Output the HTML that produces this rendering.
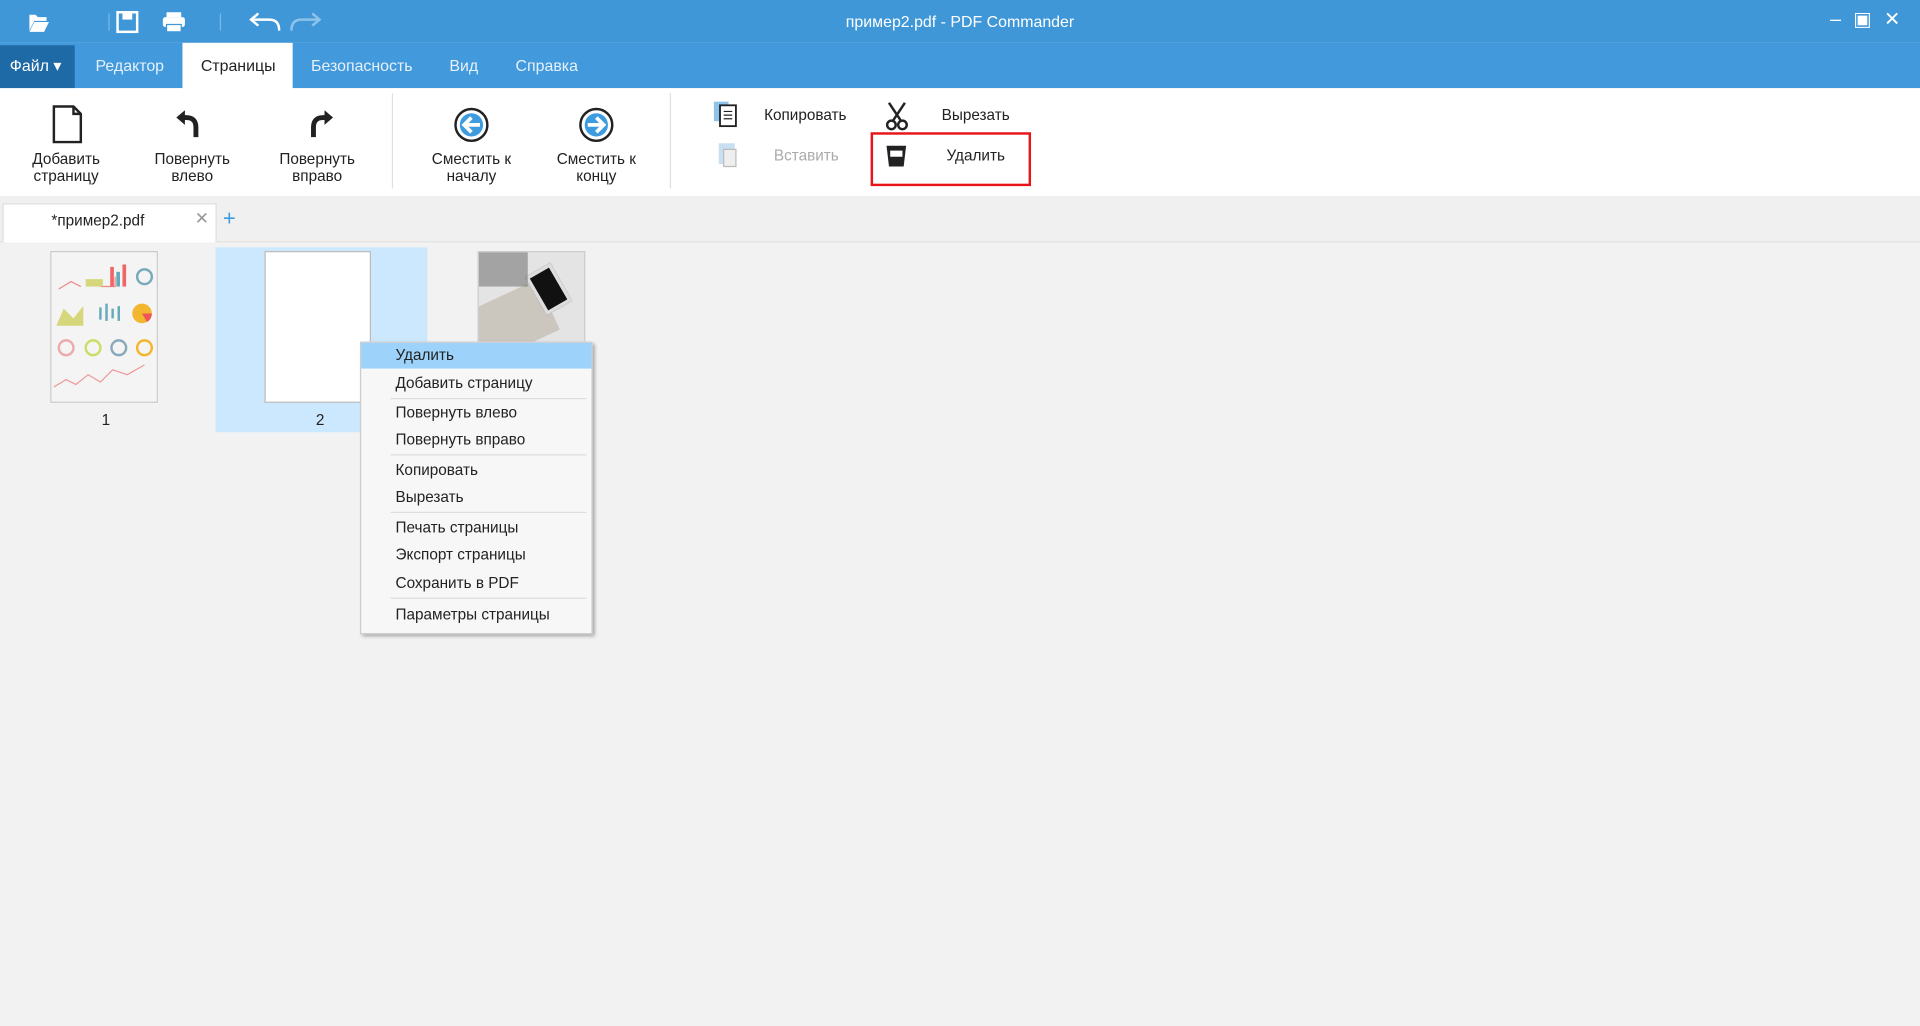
<!DOCTYPE html>
<html><head><meta charset="utf-8"><style>
*{margin:0;padding:0;box-sizing:border-box}
html,body{width:1920px;height:1026px;overflow:hidden;background:#f2f2f2}
#w{position:absolute;left:0;top:0;width:1568px;height:838px;transform:scale(1.22449);transform-origin:0 0;font-family:"Liberation Sans",sans-serif;background:#f2f2f2}
.a{position:absolute}
.title{left:0;top:0;width:1568px;height:35px;background:#3f97d8}
.menu{left:0;top:35px;width:1568px;height:37px;background:#4299db}
.mi{position:absolute;top:35px;height:37px;line-height:37px;font-size:13px;color:#e6f1fb}
.tb{left:0;top:72px;width:1568px;height:88px;background:#fff}
.lbl{position:absolute;font-size:12.5px;color:#222;text-align:center;line-height:14px}
.cm{left:294px;top:279px;width:190px;height:239px;background:#f7f7f7;border:1px solid #ccc;box-shadow:2px 2px 3px rgba(0,0,0,.35)}
.ci{position:absolute;left:28px;font-size:12.5px;color:#222}
.sep{position:absolute;left:24px;right:4px;height:1px;background:#ddd}
</style></head><body><div id="w">
<div class="a title"></div>
<div class="a" style="left:0;top:0;width:1568px;text-align:center;line-height:35px;color:#fff;font-size:13px">пример2.pdf - PDF Commander</div>
<svg class="a" style="left:20px;top:8px" width="250" height="20" viewBox="0 0 250 20">
<path d="M4 4h5l2 2h7v3H8l-4 8z" fill="#fff"/><path d="M8 10h12l-4 8H4z" fill="#fff"/>
<line x1="69" y1="3" x2="69" y2="17" stroke="#7db8e6"/>
<rect x="76" y="2" width="16" height="16" fill="none" stroke="#fff" stroke-width="2"/><rect x="80" y="3" width="8" height="5" fill="#fff"/>
<rect x="113" y="6" width="18" height="8" rx="2" fill="#fff"/><rect x="116" y="2" width="12" height="4" fill="#fff"/><rect x="116" y="12" width="12" height="6" fill="#fff" stroke="#3f97d8"/>
<line x1="160" y1="3" x2="160" y2="17" stroke="#7db8e6"/>
<path d="M186 8h14q8 0 8 9" fill="none" stroke="#fff" stroke-width="2"/><path d="M191 3l-6 5 6 5" fill="none" stroke="#fff" stroke-width="2"/>
<path d="M240 8h-14q-8 0-8 9" fill="none" stroke="#8fc2ea" stroke-width="2"/><path d="M235 3l6 5-6 5" fill="none" stroke="#8fc2ea" stroke-width="2"/>
</svg>
<div class="a" style="right:6px;top:6px;color:#fff;font-size:16px;letter-spacing:10px">–▣✕</div>
<div class="a menu"></div>
<div class="a" style="left:0;top:37px;width:61px;height:35px;background:#1e6aa6"></div>
<div class="mi" style="left:8px;color:#fff">Файл ▾</div>
<div class="mi" style="left:78px">Редактор</div>
<div class="a" style="left:149px;top:35px;width:90px;height:38px;background:#fff"></div>
<div class="mi" style="left:164px;color:#222">Страницы</div>
<div class="mi" style="left:254px">Безопасность</div>
<div class="mi" style="left:367px">Вид</div>
<div class="mi" style="left:421px">Справка</div>
<div class="a tb"></div>
<div class="a" style="left:320px;top:76px;width:1px;height:78px;background:#e0e0e0"></div>
<div class="a" style="left:547px;top:76px;width:1px;height:78px;background:#e0e0e0"></div>
<svg class="a" style="left:0;top:82px" width="560" height="36">
<path d="M44 5h16l6 6v23H44z M60 5v6h6" fill="none" stroke="#222" stroke-width="2"/>
<path d="M160 30V22q0-8-8-8h-4" fill="none" stroke="#222" stroke-width="4"/><path d="M151 8l-7 6 7 6z" fill="#222"/>
<path d="M256 30V22q0-8 8-8h4" fill="none" stroke="#222" stroke-width="4"/><path d="M265 8l7 6-7 6z" fill="#222"/>
<circle cx="385" cy="20" r="13" fill="#fff" stroke="#222" stroke-width="2"/><circle cx="385" cy="20" r="9.5" fill="#3d9be0"/><path d="M392 20h-12M385 14l-6 6 6 6" fill="none" stroke="#fff" stroke-width="3"/>
<circle cx="487" cy="20" r="13" fill="#fff" stroke="#222" stroke-width="2"/><circle cx="487" cy="20" r="9.5" fill="#3d9be0"/><path d="M480 20h12M487 14l6 6-6 6" fill="none" stroke="#fff" stroke-width="3"/>
</svg>
<div class="lbl" style="left:14px;top:123px;width:80px">Добавить<br>страницу</div>
<div class="lbl" style="left:117px;top:123px;width:80px">Повернуть<br>влево</div>
<div class="lbl" style="left:219px;top:123px;width:80px">Повернуть<br>вправо</div>
<div class="lbl" style="left:340px;top:123px;width:90px">Сместить к<br>началу</div>
<div class="lbl" style="left:442px;top:123px;width:90px">Сместить к<br>концу</div>
<svg class="a" style="left:580px;top:82px" width="170" height="60">
<rect x="3" y="1" width="12" height="16" fill="#8ec3ea"/><rect x="8" y="4" width="13" height="17" fill="#fff" stroke="#222" stroke-width="1.5"/><path d="M11 9h7M11 12h7M11 15h7" stroke="#222"/>
<rect x="7" y="35" width="13" height="17" fill="#c8dff2"/><rect x="11" y="40" width="10" height="14" fill="#eee" stroke="#bbb"/>
<circle cx="148" cy="20" r="3.5" fill="none" stroke="#222" stroke-width="2"/><circle cx="157" cy="20" r="3.5" fill="none" stroke="#222" stroke-width="2"/><path d="M146 2l10 15M159 2l-10 15" stroke="#222" stroke-width="2"/>
<path d="M144 37h16l-2 17h-12z" fill="#222"/><rect x="147" y="41" width="10" height="5" fill="#fff"/>
</svg>
<div class="a" style="left:624px;top:87px;font-size:12.5px;color:#222">Копировать</div>
<div class="a" style="left:632px;top:120px;font-size:12.5px;color:#aaa">Вставить</div>
<div class="a" style="left:769px;top:87px;font-size:12.5px;color:#222">Вырезать</div>
<div class="a" style="left:773px;top:120px;font-size:12.5px;color:#222">Удалить</div>
<div class="a" style="left:711px;top:108px;width:131px;height:44px;border:2px solid #e8141a"></div>
<div class="a" style="left:0;top:160px;width:1568px;height:38px;background:#f0f0f0;border-bottom:1px solid #e2e2e2"></div>
<div class="a" style="left:2px;top:166px;width:175px;height:32px;background:#fff;border:1px solid #ddd;border-bottom:none"></div>
<div class="a" style="left:42px;top:173px;font-size:12.5px;color:#222">*пример2.pdf</div>
<div class="a" style="left:159px;top:170px;font-size:14px;color:#999">✕</div>
<div class="a" style="left:182px;top:168px;font-size:18px;color:#3d9be0">+</div>
<div class="a" style="left:176px;top:202px;width:173px;height:151px;background:#cce8ff"></div>
<div class="a" style="left:41px;top:205px;width:88px;height:124px;background:#f4f4f4;border:1px solid #ccc">
<svg width="86" height="122"><path d="M6 30l10-6 8 4M40 28h12v-8" stroke="#e88" fill="none"/><rect x="28" y="22" width="14" height="6" fill="#d6d67a"/><rect x="48" y="12" width="3" height="16" fill="#e66"/><rect x="53" y="16" width="3" height="12" fill="#6ab"/><rect x="58" y="10" width="3" height="18" fill="#e66"/><circle cx="76" cy="20" r="6" fill="none" stroke="#7ab" stroke-width="2"/><path d="M4 60l6-14 8 8 8-10v16z" fill="#d6d67a"/><path d="M40 45v10M45 42v14M50 46v8M55 44v12" stroke="#6ab" stroke-width="2"/><circle cx="74" cy="50" r="8" fill="#f3b62f"/><path d="M74 50l8 0a8 8 0 0 1-4 7z" fill="#e55"/><circle cx="12" cy="78" r="6" fill="none" stroke="#eaa" stroke-width="2"/><circle cx="34" cy="78" r="6" fill="none" stroke="#cd6" stroke-width="2"/><circle cx="55" cy="78" r="6" fill="none" stroke="#8ab" stroke-width="2"/><circle cx="76" cy="78" r="6" fill="none" stroke="#f3b62f" stroke-width="2"/><path d="M2 110l10-6 8 4 10-8 10 6 10-10 12 4 14-8" stroke="#e99" fill="none"/></svg></div>
<div class="a" style="left:216px;top:205px;width:87px;height:124px;background:#fff;border:1px solid #bbb"></div>
<div class="a" style="left:390px;top:205px;width:88px;height:75px;background:#e4e4e4;overflow:hidden;border:1px solid #ccc">
<div class="a" style="left:-10px;top:35px;width:70px;height:45px;background:#cbc6be;transform:rotate(-25deg)"></div>
<div class="a" style="left:45px;top:12px;width:24px;height:36px;background:#111;border:3px solid #ddd;transform:rotate(-30deg)"></div>
<div class="a" style="left:0;top:0;width:40px;height:28px;background:#555;opacity:.45"></div></div>
<div class="a" style="left:83px;top:336px;font-size:12.5px;color:#222">1</div>
<div class="a" style="left:258px;top:336px;font-size:12.5px;color:#222">2</div>
<div class="a cm">
<div class="a" style="left:0;top:0;width:188px;height:21px;background:#9dd2fb"></div>
<div class="ci" style="top:3px">Удалить</div>
<div class="ci" style="top:26px">Добавить страницу</div>
<div class="sep" style="top:45px"></div>
<div class="ci" style="top:50px">Повернуть влево</div>
<div class="ci" style="top:72px">Повернуть вправо</div>
<div class="sep" style="top:91px"></div>
<div class="ci" style="top:97px">Копировать</div>
<div class="ci" style="top:119px">Вырезать</div>
<div class="sep" style="top:138px"></div>
<div class="ci" style="top:144px">Печать страницы</div>
<div class="ci" style="top:166px">Экспорт страницы</div>
<div class="ci" style="top:189px">Сохранить в PDF</div>
<div class="sep" style="top:208px"></div>
<div class="ci" style="top:215px">Параметры страницы</div>
</div>
</div></body></html>
